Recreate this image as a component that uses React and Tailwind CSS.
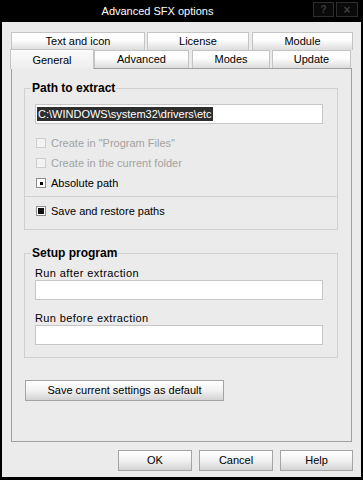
import React from "react";

const TABS_TOP = [
  { label: "Text and icon", w: "w-[134px]" },
  { label: "License", w: "w-[102px]" },
  { label: "Module", w: "w-[101px]" },
];

function Tab({ label, w, className = "" }) {
  return (
    <div
      className={`${w} h-full flex items-center justify-center border border-b-0 border-[#c4c4c4] bg-linear-to-b from-white from-40% to-[#dcdcdc] text-black ${className}`}
    >
      {label}
    </div>
  );
}

function Check({ label, kind, disabled }) {
  return (
    <div className="h-[20px] flex items-center">
      <span
        className={`ml-[1px] w-[10px] h-[10px] flex items-center justify-center border ${
          disabled ? "border-[#cdcdcd] bg-[#f3f3f3]" : "border-[#8c8c8c] bg-white"
        }`}
      >
        {kind === "dot" && <span className="w-[3px] h-[3px] bg-black" />}
        {kind === "fill" && <span className="w-[6px] h-[6px] bg-[#111]" />}
      </span>
      <span className={`ml-[5px] ${disabled ? "text-[#a2a2a2]" : "text-black"}`}>{label}</span>
    </div>
  );
}

function Btn({ children, w }) {
  return (
    <button
      className={`${w} h-[21px] border border-[#a4a4a4] bg-linear-to-b from-white via-[#f2f2f2] to-[#d3d3d3] text-black text-[11px] leading-none`}
    >
      {children}
    </button>
  );
}

function Field({ children }) {
  return <div className="w-[288px] h-[20px] border border-[#c6c6c6] bg-white flex items-center pl-[1px]">{children}</div>;
}

export default function App() {
  return (
    <div className="w-[363px] h-[480px] bg-black flex flex-col pl-[2px] pr-[2px] pb-[3px] font-['Liberation_Sans',Arial,sans-serif] text-[11px]">
      {/* title bar */}
      <div className="h-[22px] -ml-[2px] -mr-[2px] flex items-center">
        <div className="flex-1 text-center text-white text-[11px] pl-[2px]">Advanced SFX options</div>
        <div className="flex gap-[2px] mr-[5px] mb-[3px]">
          <span className="w-[21px] h-[15px] border border-[#2e2e2e] bg-[#0a0a0a] flex items-center justify-center text-[#3e3e3e] text-[10px] font-bold">?</span>
          <span className="w-[22px] h-[15px] border border-[#2e2e2e] bg-[#0a0a0a] flex items-center justify-center text-[#3e3e3e] text-[12px] font-bold">×</span>
        </div>
      </div>

      {/* body */}
      <div className="flex-1 bg-[#ebebeb] flex flex-col">
        <div className="pt-[10px] pl-[9px] flex gap-[2px] h-[28px]">
          {TABS_TOP.map((t, i) => (
            <Tab key={t.label} {...t} className={i === 2 ? "ml-[1px]" : ""} />
          ))}
        </div>
        <div className="pl-[8px] flex items-end h-[18px]">
          <div className="relative z-10 w-[84px] h-[20px] -mb-[1px] border border-b-0 border-[#c4c4c4] bg-linear-to-b from-[#fbfbfb] to-[#ededed] flex items-start justify-center pt-[2px]">
            General
          </div>
          <Tab label="Advanced" w="w-[95px]" className="h-[16px]" />
          <Tab label="Modes" w="w-[78px]" className="h-[16px] ml-[3px]" />
          <Tab label="Update" w="w-[79px]" className="h-[16px] ml-[2px]" />
        </div>

        {/* tab panel */}
        <div className="ml-[9px] w-[341px] h-[374px] border border-[#a0a0a0] pl-[12px] pt-[12px] flex flex-col">
          <fieldset className="w-[314px] border border-[#d0d0d0] px-[10px] pb-[8px]">
            <legend className="-ml-[4px] px-[1px] text-[12px] leading-[14px] font-bold text-black">Path to extract</legend>
            <div className="mt-[9px]">
              <Field>
                <span className="bg-[#2e2e2e] text-white px-[1px] leading-[14px]">C:\WINDOWS\system32\drivers\etc</span>
              </Field>
            </div>
            <div className="mt-[9px]">
              <Check label={'Create in "Program Files"'} disabled />
              <Check label="Create in the current folder" disabled />
              <Check label="Absolute path" kind="dot" />
            </div>
            <div className="-mx-[10px] mt-[3px] border-t border-[#d0d0d0]" />
            <div className="mt-[4px]">
              <Check label="Save and restore paths" kind="fill" />
            </div>
          </fieldset>

          <fieldset className="mt-[16px] w-[314px] border border-[#d0d0d0] px-[10px] pb-[12px]">
            <legend className="-ml-[4px] px-[1px] text-[12px] leading-[14px] font-bold text-black">Setup program</legend>
            <div className="mt-[6px] h-[14px] leading-[14px] tracking-[0.4px] text-black">Run after extraction</div>
            <Field />
            <div className="mt-[11px] h-[14px] leading-[14px] tracking-[0.4px] text-black">Run before extraction</div>
            <Field />
          </fieldset>

          <div className="mt-[22px] ml-[1px]">
            <Btn w="w-[199px]">Save current settings as default</Btn>
          </div>
        </div>

        <div className="mt-[8px] pr-[8px] flex justify-end gap-[7px]">
          <Btn w="w-[74px]">OK</Btn>
          <Btn w="w-[74px]">Cancel</Btn>
          <Btn w="w-[73px]">Help</Btn>
        </div>
      </div>
    </div>
  );
}
